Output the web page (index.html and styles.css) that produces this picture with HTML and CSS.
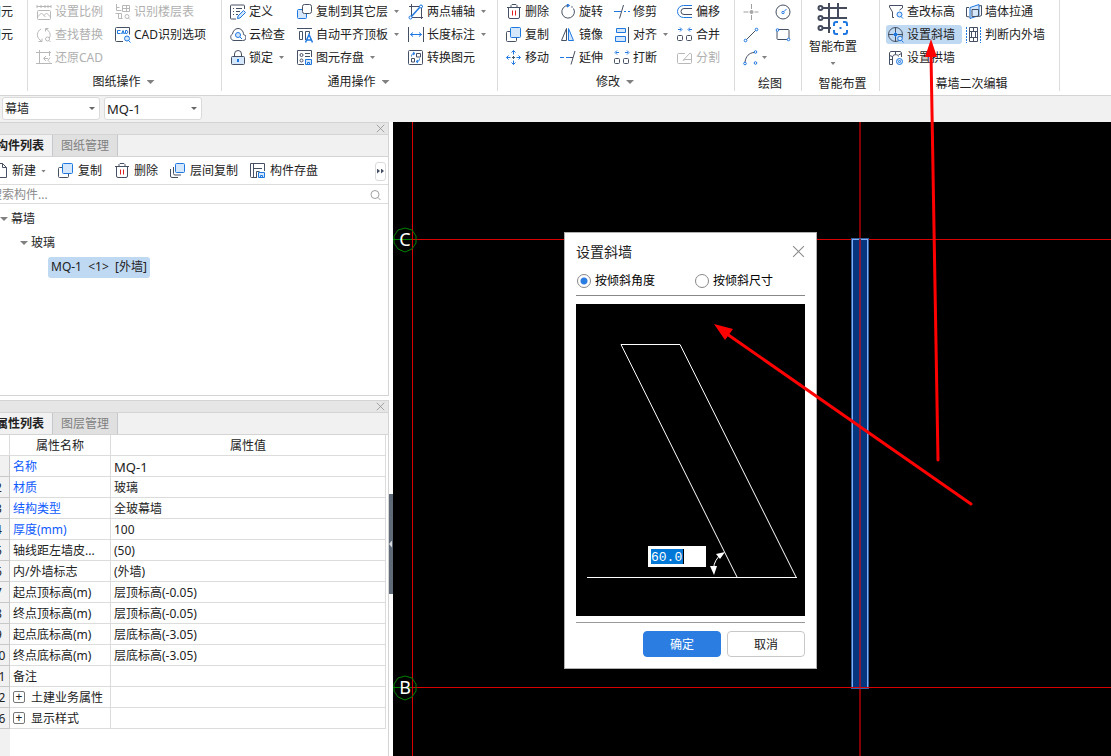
FILE: index.html
```html
<!DOCTYPE html>
<html lang="zh-CN">
<head>
<meta charset="utf-8">
<title>设置斜墙</title>
<link rel="stylesheet" href="styles.css">
</head>
<body>
<svg class="defs" aria-hidden="true">
  <symbol id="scale" viewBox="0 0 16 16"><path class="k" d="M1 1v3M15 1v3M1 2.500h14M5 1v3M9 1v3M12 1v3"/><rect class="k" x="1.500" y="6.500" width="13" height="9" rx="1"/><path class="k" d="M1.500 13l4-4 4 4M8 11.500l2.500-2.500 4 4"/></symbol>
  <symbol id="floors" viewBox="0 0 16 16"><path class="k" d="M1.500 0v6.500h5M1.500 3.500h3M7.500 1.500h7v6h-7zM7.500 4.500h7M11.500 1.500v6M.500 9.500h6v5M3.500 9.500v5h4"/><circle class="k" cx="12" cy="12.500" r="2"/><path class="k" d="M13.500 14l1.500 1.500"/></symbol>
  <symbol id="replace" viewBox="0 0 16 16"><path class="k" d="M5 2a6.500 6.500 0 0 0-1 11l1.500 1M2.500 14.500h3.500v-3M9.500 2a6.300 6.300 0 0 1 4 9M12.500 1.500h-3v3"/><circle class="k" cx="11.500" cy="12" r="2"/><path class="k" d="M13 13.500l1.500 1.500"/></symbol>
  <symbol id="cad" viewBox="0 0 16 16"><path class="k" d="M.500 7v6.500a1 1 0 0 0 1 1H8M.500 7V1.500a1 1 0 0 1 1-1h13v7"/><path class="b" d="M5.500 3.500h-3v3h3M6.500 7L8 3.500 9.500 7M7 6h2M10.500 3.500v3h1.500l1-1.500-1-1.500z"/><circle class="bf" cx="12" cy="11.500" r="2.500"/><path class="b" d="M13.500 13.500l2 2"/></symbol>
  <symbol id="restore" viewBox="0 0 16 16"><path class="k" d="M0 2.500h15M3.500 0v14M0 13.500h16M13.500 1v5"/><path class="k" d="M8 8.500h4M10 6l-2.500 2.500L10 11M14 7.500l-2 3 2 2"/></symbol>
  <symbol id="define" viewBox="0 0 16 16"><path class="k" d="M14.500 5V2a1 1 0 0 0-1-1h-12a1 1 0 0 0-1 1v12a1 1 0 0 0 1 1H6M3 4.500h1M6 4.500h6M3 7.500h1M6 7.500h4M3 10.500h1M6 10.500h2"/><path class="bf" d="M8 12l5.500-5.500 2 2L10 14l-2.500.500z"/></symbol>
  <symbol id="cloud" viewBox="0 0 16 16"><path class="k" d="M4 13.500h8.500a3 3 0 0 0 1-6C13.500 4 11 1.500 8 1.500S3 4 2.500 7c-3 1.500-2 6.500 1.500 6.500z"/><circle class="bf" cx="8" cy="8" r="2.500"/><path class="b" d="M10 10l2 2"/></symbol>
  <symbol id="lock" viewBox="0 0 16 16"><path class="k" d="M4.500 6V4a3.500 3.500 0 0 1 7 0v2"/><rect class="kf" x="1.500" y="6.500" width="13" height="8" rx="1"/><path class="b2" d="M8 9v3"/></symbol>
  <symbol id="copy" viewBox="0 0 16 16"><path class="k" d="M4 4.500H1.500a1 1 0 0 0-1 1v8a1 1 0 0 0 1 1h8a1 1 0 0 0 1-1V11"/><rect class="bf" x="4.500" y=".500" width="10" height="10" rx="1"/></symbol>
  <symbol id="copyto" viewBox="0 0 16 16"><rect class="bf" x=".500" y="5.500" width="9" height="9" rx="1"/><rect class="kw" x="5.500" y=".500" width="9" height="9" rx="2"/></symbol>
  <symbol id="aligntop" viewBox="0 0 16 16"><path class="k" d="M0 1.500h15M2.500 4.500h3v8h-3zM8.500 13V4.500h4V7"/><path class="b15" d="M8.500 15.500L12 7.500l3.500 8M9.500 13h5"/></symbol>
  <symbol id="store" viewBox="0 0 16 16"><path class="k" d="M7 14.500H1.500a1 1 0 0 1-1-1V.500h14V7M8 3.500h5M8 6.500h5"/><circle class="k" cx="4.500" cy="5" r="1.500"/><circle class="k" cx="4.500" cy="10.500" r="1.500"/><path class="bf" d="M8.500 9.500h6v5h-6zM10.500 14.500v-2h2v2"/></symbol>
  <symbol id="axis2" viewBox="0 0 16 16"><path class="k" d="M1 2.500h14M3.500 0v15M1 13.500h14M13.500 1v14"/><path class="b15" d="M3 13L12 3"/><circle class="bw" cx="13" cy="2.500" r="1.500"/><circle class="bw" cx="2.500" cy="13.500" r="1.500"/></symbol>
  <symbol id="length" viewBox="0 0 16 16"><path class="k" d="M.500 0v15M15.500 0v15"/><path class="b" d="M2.500 7.500h11M5 5.500L2.500 7.500 5 9.500M11 5.500l2.500 2-2.500 2"/></symbol>
  <symbol id="convert" viewBox="0 0 16 16"><rect class="k" x=".500" y=".500" width="14" height="14" rx="1"/><path class="k" d="M8.500 3.500h4v3.500h-4zM3.500 8.500h3v3.500h-3z"/><path class="b" d="M3.500 6.500c0-2 .500-3 3-3M5 2l2 1.500L5 5M11.500 8.500c0 2-.500 3-3 3M10 10l-2 1.500 2 1.500"/></symbol>
  <symbol id="trash" viewBox="0 0 16 16"><path class="k" d="M1 3.500h14M2.500 4v9a1.500 1.500 0 0 0 1.500 1.500h8a1.500 1.500 0 0 0 1.500-1.500V4M5 3V1.500L6 .500h4l1 1V3"/><path class="r" d="M6.500 6.500v5M9.500 6.500v5"/></symbol>
  <symbol id="rotate" viewBox="0 0 16 16"><path class="k" d="M8 1.500a6.300 6.300 0 1 0 5.500 3"/><path class="b15" d="M7 0l2 1.500-2 1.500"/><circle class="k" cx="12" cy="3" r=".3"/></symbol>
  <symbol id="trim" viewBox="0 0 16 16"><path class="b" d="M0 7.500h7M10 7.500h2M14 7.500h2"/><path class="k" d="M9.500 1L5.500 14.500"/></symbol>
  <symbol id="offset" viewBox="0 0 16 16"><path class="b" d="M15 1.500H6.500a6 6 0 0 0 0 12H15"/><path class="k" d="M15 4.500H7a3 3 0 0 0 0 6h8"/></symbol>
  <symbol id="mirror" viewBox="0 0 16 16"><path class="k" d="M6.500 1.500v12H1.500z"/><path class="bf" d="M8.500 1.500v12h5z"/></symbol>
  <symbol id="align" viewBox="0 0 16 16"><path class="bf" d="M2.500 1.500h9v4h-9zM1.500 9.500h10v5h-10z"/><path class="k" d="M14.500 0v16"/></symbol>
  <symbol id="merge" viewBox="0 0 16 16"><rect class="k" x=".500" y="8.500" width="5" height="5" rx="1"/><rect class="k" x="9.500" y="8.500" width="5" height="5" rx="1"/><path class="b" d="M1 2.500h3M3 .500l2 2-2 2M15 2.500h-3M13 .500l-2 2 2 2"/></symbol>
  <symbol id="break" viewBox="0 0 16 16"><rect class="k" x=".500" y="8.500" width="5" height="5" rx="1"/><rect class="k" x="9.500" y="8.500" width="5" height="5" rx="1"/><path class="b" d="M2 2.500h3M3 .500l-2 2 2 2M14 2.500h-3M13 .500l2 2-2 2"/></symbol>
  <symbol id="move" viewBox="0 0 16 16"><path class="b" d="M7.500 .500v4M7.500 10.500v4M.500 7.500h4M10.500 7.500h4M5.500 2.500l2-2 2 2M5.500 12.500l2 2 2-2M2.500 5.500l-2 2 2 2M12.500 5.500l2 2-2 2"/><path class="k" d="M6 7.500h3M7.500 6v3"/></symbol>
  <symbol id="extend" viewBox="0 0 16 16"><path class="b" d="M0 7.500h4M6 7.500h4"/><path class="k" d="M10 7.500h3M15 1l-4 13.500"/></symbol>
  <symbol id="split" viewBox="0 0 16 16"><path class="k" d="M8 3.500H1.500a1 1 0 0 0-1 1v8a1 1 0 0 0 1 1h12a1 1 0 0 0 1-1V9M6 10.500L13 3l1.500 1v5.500H8z"/></symbol>
  <symbol id="point" viewBox="0 0 16 16"><path class="g" d="M8.500 0v5M8.500 11v5M.500 8h5M11.500 8h4"/><circle class="gd" cx="8.500" cy="8" r="2"/></symbol>
  <symbol id="circle" viewBox="0 0 16 16"><circle class="k" cx="8" cy="8" r="7"/><circle class="bw" cx="8" cy="8.500" r="1.200"/><path class="b" d="M9 7.500l2.500-2.500"/></symbol>
  <symbol id="line" viewBox="0 0 16 16"><path class="k" d="M3 13L13 3"/><circle class="bw" cx="2.500" cy="13.500" r="1.300"/><circle class="bw" cx="13.500" cy="2.500" r="1.300"/></symbol>
  <symbol id="rect" viewBox="0 0 16 16"><rect class="k" x="2" y="2.500" width="12" height="10" rx="1"/><circle class="bw" cx="2.500" cy="3" r="1.300"/><circle class="bw" cx="13.500" cy="12.500" r="1.300"/></symbol>
  <symbol id="arc" viewBox="0 0 16 16"><path class="k" d="M2 12C3 6 6 3 11 2.500"/><circle class="bw" cx="2" cy="13.500" r="1.300"/><circle class="bw" cx="12.500" cy="2" r="1.300"/><circle class="bw" cx="12.500" cy="13" r="1.300"/></symbol>
  <symbol id="smart" viewBox="0 0 32 32"><path class="k2" d="M5 5h25M5 15h25M5 25h9M12 0v30M21 0v15"/><circle class="k2w" cx="3.500" cy="5" r="2"/><circle class="k2w" cx="3.500" cy="15" r="2"/><circle class="k2w" cx="3.500" cy="25" r="2"/><path class="b2" d="M17 23v-2a2 2 0 0 1 2-2h2M26 19h2a2 2 0 0 1 2 2v2M30 27v2a2 2 0 0 1-2 2h-2M21 31h-2a2 2 0 0 1-2-2v-2M23.500 24v2"/></symbol>
  <symbol id="height" viewBox="0 0 16 16"><path class="k" d="M6 13.500H4.500V8L1.500 3V1.500h13V4l-3 2"/><circle class="bf" cx="11.500" cy="10.500" r="2.500"/><path class="b" d="M13 12.500l2 2"/></symbol>
  <symbol id="through" viewBox="0 0 16 16"><path class="bf" d="M4 3.500l9-3v11l-9 3z"/><path class="k" d="M3 3.500H.500v9l3 .500M13 2l2.500-.500v10l-2.500 1M6 5.500h6.500v7H6z"/></symbol>
  <symbol id="slant" viewBox="0 0 16 16"><circle class="k" cx="7.500" cy="7.500" r="7"/><path class="k" d="M0 7.500h15M7.500 0v15"/><path class="bd" d="M7.500 5.500l2 2-2 2-2-2z"/><circle class="bf" cx="12" cy="11.500" r="2.300"/><path class="b" d="M13.500 13.500l2 2"/></symbol>
  <symbol id="judge" viewBox="0 0 16 16"><path class="k" d="M3.500 .500h8v14h-8zM3.500 4.500h8M3.500 10.500h8M7.500 .500v4M5.500 4.500v6M9.500 4.500v6M7.500 10.500v4"/><path class="bdash" d="M.500 0v16M14.500 0v16"/></symbol>
  <symbol id="arch" viewBox="0 0 16 16"><path class="k" d="M1.500 14.500V3l1-1.500h10l1 1.500v4M1.500 14.500h3V7c0-3 6-3 6-.500M1.500 9.500h3M1.500 5.500l3 1M7.500 1.500v3M10.500 5l3-1.500"/><circle class="bf" cx="11.500" cy="11.500" r="3"/><circle class="b" cx="11.500" cy="11.500" r="1"/></symbol>
  <symbol id="file" viewBox="0 0 16 16"><path class="k" d="M3 .500h7.500l4 4v10h-12V1M10.500 .500v4h4"/></symbol>
  <symbol id="layercopy" viewBox="0 0 16 16"><path class="k" d="M.500 6v7a1.500 1.500 0 0 0 1.500 1.500h6M3.500 4v6.500a1.500 1.500 0 0 0 1.500 1.500h6"/><rect class="bf" x="5.500" y=".500" width="9" height="9" rx="1"/></symbol>
  <symbol id="save" viewBox="0 0 16 16"><path class="k" d="M7 14.500H1.500a1 1 0 0 1-1-1V.500h14V8M3.500 .500v14M3.500 5.500H12M6.500 14.500V8.500h3"/><path class="bf" d="M8.500 9.500h6v5h-6zM10.500 14.500v-2h2v2"/></symbol>
  <symbol id="find" viewBox="0 0 16 16"><circle class="g" cx="7" cy="7.500" r="4"/><path class="g" d="M10 10.500l2.500 2.500"/></symbol>
  <symbol id="close" viewBox="0 0 12 12"><path class="x" d="M1 1l10 10M11 1L1 11"/></symbol>
</svg>

<div class="app">
  <header class="ribbon">
    <section class="group g-cut">
      <div class="tools"><button class="tool">图元</button><button class="tool">图元</button></div>
    </section>
    <section class="group g-sheet">
      <div class="tools">
        <button class="tool off" disabled><svg><use href="#scale"/></svg>设置比例</button>
        <button class="tool off" disabled><svg><use href="#floors"/></svg>识别楼层表</button>
        <button class="tool off" disabled><svg><use href="#replace"/></svg>查找替换</button>
        <button class="tool"><svg><use href="#cad"/></svg>CAD识别选项</button>
        <button class="tool off" disabled><svg><use href="#restore"/></svg>还原CAD</button>
      </div>
      <h2 class="caption">图纸操作<i class="caret big"></i></h2>
    </section>
    <section class="group g-common">
      <div class="tools">
        <button class="tool"><svg><use href="#define"/></svg>定义</button>
        <button class="tool"><svg><use href="#copyto"/></svg>复制到其它层<i class="caret"></i></button>
        <button class="tool"><svg><use href="#axis2"/></svg>两点辅轴<i class="caret"></i></button>
        <button class="tool"><svg><use href="#cloud"/></svg>云检查</button>
        <button class="tool"><svg><use href="#aligntop"/></svg>自动平齐顶板<i class="caret"></i></button>
        <button class="tool"><svg><use href="#length"/></svg>长度标注<i class="caret"></i></button>
        <button class="tool"><svg><use href="#lock"/></svg>锁定<i class="caret"></i></button>
        <button class="tool"><svg><use href="#store"/></svg>图元存盘<i class="caret"></i></button>
        <button class="tool"><svg><use href="#convert"/></svg>转换图元</button>
      </div>
      <h2 class="caption">通用操作<i class="caret big"></i></h2>
    </section>
    <section class="group g-modify">
      <div class="tools">
        <button class="tool"><svg><use href="#trash"/></svg>删除</button>
        <button class="tool"><svg><use href="#rotate"/></svg>旋转</button>
        <button class="tool"><svg><use href="#trim"/></svg>修剪</button>
        <button class="tool"><svg><use href="#offset"/></svg>偏移</button>
        <button class="tool"><svg><use href="#copy"/></svg>复制</button>
        <button class="tool"><svg><use href="#mirror"/></svg>镜像</button>
        <button class="tool"><svg><use href="#align"/></svg>对齐<i class="caret"></i></button>
        <button class="tool"><svg><use href="#merge"/></svg>合并</button>
        <button class="tool"><svg><use href="#move"/></svg>移动</button>
        <button class="tool"><svg><use href="#extend"/></svg>延伸</button>
        <button class="tool"><svg><use href="#break"/></svg>打断</button>
        <button class="tool off" disabled><svg><use href="#split"/></svg>分割</button>
      </div>
      <h2 class="caption">修改<i class="caret big"></i></h2>
    </section>
    <section class="group g-draw">
      <div class="tools">
        <button class="tool" aria-label="点"><svg><use href="#point"/></svg></button>
        <button class="tool" aria-label="圆"><svg><use href="#circle"/></svg></button>
        <button class="tool" aria-label="直线"><svg><use href="#line"/></svg></button>
        <button class="tool" aria-label="矩形"><svg><use href="#rect"/></svg></button>
        <button class="tool" aria-label="弧"><svg><use href="#arc"/></svg><i class="caret"></i></button>
      </div>
      <h2 class="caption low">绘图</h2>
    </section>
    <section class="group g-smart">
      <button class="bigtool"><svg><use href="#smart"/></svg>智能布置<i class="caret"></i></button>
      <h2 class="caption low">智能布置</h2>
    </section>
    <section class="group g-wall">
      <div class="tools">
        <button class="tool"><svg><use href="#height"/></svg>查改标高</button>
        <button class="tool"><svg><use href="#through"/></svg>墙体拉通</button>
        <button class="tool active"><svg><use href="#slant"/></svg>设置斜墙</button>
        <button class="tool"><svg><use href="#judge"/></svg>判断内外墙</button>
        <button class="tool"><svg><use href="#arch"/></svg>设置拱墙</button>
      </div>
      <h2 class="caption low">幕墙二次编辑</h2>
    </section>
  </header>

  <div class="filters">
    <div class="pick"><select aria-label="构件类型"><option>幕墙</option></select></div>
    <div class="pick"><select class="latin" aria-label="构件"><option>MQ-1</option></select></div>
  </div>

  <main class="work">
    <aside class="side">
      <section class="panel panel-list">
        <div class="grip"><button aria-label="关闭"><svg><use href="#close"/></svg></button></div>
        <div class="tabs"><button class="tab on">构件列表</button><button class="tab">图纸管理</button></div>
        <div class="bar">
          <button class="act"><svg><use href="#file"/></svg>新建<i class="caret"></i></button>
          <button class="act"><svg><use href="#copy"/></svg>复制</button>
          <button class="act"><svg><use href="#trash"/></svg>删除</button>
          <button class="act"><svg><use href="#layercopy"/></svg>层间复制</button>
          <button class="act"><svg><use href="#save"/></svg>构件存盘</button>
          <button class="more" aria-label="更多"><i></i><i></i></button>
        </div>
        <div class="search"><input type="text" placeholder="搜索构件..." aria-label="搜索构件"><svg><use href="#find"/></svg></div>
        <ul class="tree">
          <li class="l1"><i class="caret big"></i>幕墙</li>
          <li class="l2"><i class="caret big"></i>玻璃</li>
          <li class="l3"><span class="picked">MQ-1&nbsp; &lt;1&gt;&nbsp; [外墙]</span></li>
        </ul>
      </section>
      <section class="panel panel-props">
        <div class="grip"><button aria-label="关闭"><svg><use href="#close"/></svg></button></div>
        <div class="tabs"><button class="tab on">属性列表</button><button class="tab">图层管理</button></div>
        <div class="sheet">
        <table>
          <colgroup><col class="c-no"><col class="c-name"><col></colgroup>
          <thead><tr><th></th><th>属性名称</th><th>属性值</th></tr></thead>
          <tbody>
            <tr class="key"><th>1</th><td>名称</td><td class="latin">MQ-1</td></tr>
            <tr class="key"><th>2</th><td>材质</td><td>玻璃</td></tr>
            <tr class="key"><th>3</th><td>结构类型</td><td>全玻幕墙</td></tr>
            <tr class="key"><th>4</th><td>厚度(mm)</td><td>100</td></tr>
            <tr><th>5</th><td>轴线距左墙皮...</td><td>(50)</td></tr>
            <tr><th>6</th><td>内/外墙标志</td><td>(外墙)</td></tr>
            <tr><th>7</th><td>起点顶标高(m)</td><td>层顶标高(-0.05)</td></tr>
            <tr><th>8</th><td>终点顶标高(m)</td><td>层顶标高(-0.05)</td></tr>
            <tr><th>9</th><td>起点底标高(m)</td><td>层底标高(-3.05)</td></tr>
            <tr><th>10</th><td>终点底标高(m)</td><td>层底标高(-3.05)</td></tr>
            <tr><th>11</th><td>备注</td><td></td></tr>
            <tr><th>12</th><td><button class="plus" aria-label="展开">+</button>土建业务属性</td><td></td></tr>
            <tr><th>16</th><td><button class="plus" aria-label="展开">+</button>显示样式</td><td></td></tr>
          </tbody>
        </table>
        </div>
      </section>
    </aside>
    <div class="splitter"><button aria-label="收起"></button></div>
    <section class="canvas">
      <svg class="drawing" aria-hidden="true">
        <rect class="axis" x="19" y="0" width="1" height="100%"/>
        <rect class="axis" x="19" y="117" width="100%" height="1"/>
        <rect class="axis-dark" x="466" y="0" width="2" height="100%"/>
        <rect class="wall-out" x="458.500" y="116.500" width="17" height="450"/>
        <rect class="wall" x="459.500" y="117.500" width="15" height="448"/>
        <rect class="wall-mid" x="466" y="117" width="2" height="449"/>
        <rect class="axis" x="19" y="565" width="100%" height="1"/>
        <path class="bubble" d="M12 106l7 2 4 6v7l-4 6-7 3-7-3-4-6v-7l4-6z"/>
        <path class="bubble" d="M12 554l7 2 4 6v7l-4 6-7 3-7-3-4-6v-7l4-6z"/>
        <path class="bubble" d="M0 117.500h19M0 565.500h19"/>
        <text class="mark" x="12" y="124">C</text>
        <text class="mark" x="12" y="572">B</text>
      </svg>
      <div class="dialog" role="dialog" aria-labelledby="dlg-title">
        <div class="dlg-head"><h1 id="dlg-title">设置斜墙</h1><button aria-label="关闭"><svg><use href="#close"/></svg></button></div>
        <div class="modes">
          <label><input type="radio" name="mode" checked>按倾斜角度</label>
          <label><input type="radio" name="mode">按倾斜尺寸</label>
        </div>
        <div class="preview">
          <svg viewBox="0 0 229 312" aria-hidden="true">
            <path class="shape" d="M11 273.500h210M161 273L45 40.500h59L220 273"/>
            <path class="shape" d="M137.500 264q1-8 7-13"/>
            <path class="tip" d="M149 248l-9 2 4 5zM134 262h7l-3 9z"/>
          </svg>
          <input class="angle" type="text" value="60.0" aria-label="倾斜角度">
        </div>
        <div class="dlg-foot"><button class="ok">确定</button><button>取消</button></div>
      </div>
    </section>
  </main>
  <svg class="notes" aria-hidden="true">
    <path class="shaft" d="M938 460L931 54M971 504L727 334"/>
    <path class="head" d="M931 39l6 18h-12zM714 324l19 5-8 11z"/>
  </svg>
</div>
</body>
</html>
```
FILE: styles.css
```css
* { box-sizing: border-box; }
body {
  margin: 0;
  overflow: hidden;
  background: #fff;
  color: #222;
  font: 12px/18px "Noto Sans", "Noto Sans CJK SC", sans-serif;
}
button, input, select { font: inherit; color: inherit; }
button { margin: 0; padding: 0; border: 0; background: none; white-space: nowrap; }
h1, h2 { margin: 0; font-weight: 400; }
.defs { position: absolute; width: 0; height: 0; }
.latin { font-size: 13px; }

/* icon strokes */
.k, .kf, .kw { fill: none; stroke: #465064; }
.kf { fill: #d5e7fb; }
.kw { fill: #fff; }
.k2, .k2w { fill: none; stroke: #434b5c; stroke-width: 2; }
.k2w { fill: #fff; }
.b, .b15, .bf, .bw { fill: none; stroke: #1f78e0; }
.b15 { stroke-width: 1.5; }
.bf { fill: #d5e7fb; }
.bw { fill: #fff; }
.b2 { fill: none; stroke: #1f78e0; stroke-width: 2; }
.bd { fill: #1f78e0; stroke: #1f78e0; }
.bdash { fill: none; stroke: #1f78e0; stroke-dasharray: 2 1; }
.r { fill: none; stroke: #e02020; }
.g { fill: none; stroke: #a0a0a0; }
.gd { fill: #a8a8a8; }
.x { fill: none; stroke: #8c8c8c; }

.app { position: relative; display: flex; flex-direction: column; height: 100vh; overflow: hidden; }

/* ribbon */
.ribbon { display: flex; flex: none; padding-bottom: 4px; border-bottom: 1px solid #d4d4d4; background: #fff; }
.group { display: flex; flex-direction: column; flex: none; padding-left: 6px; border-right: 1px solid #dcdcdc; }
.tools { display: grid; grid-auto-rows: 23px; align-items: center; flex: none; height: 69px; }
.tool { display: flex; align-items: center; gap: 3px; height: 19px; padding: 0 2px; border-radius: 3px; }
.tool svg, .act svg { flex: none; width: 16px; height: 16px; }
.tool.active { background: #bfd9f2; }
.off { color: #b0b0b0; }
.off svg { opacity: .4; filter: grayscale(1); }
.caret { flex: none; width: 5px; height: 3px; margin-left: 3px; background: #808080; clip-path: polygon(0 0, 100% 0, 50% 100%); }
.caret.big { width: 8px; height: 4px; }
.caption { display: flex; align-items: center; justify-content: center; gap: 3px; padding: 4px 8px 0 0; font-size: 12px; line-height: 18px; }
.caption.low { padding: 8px 2px 0 0; line-height: 14px; }
.g-cut { width: 28px; padding: 0 12px 0 0; align-items: flex-end; }
.g-sheet { width: 194px; }
.g-sheet .tools { grid-template-columns: 79px 1fr; }
.g-common { width: 276px; }
.g-common .tools { grid-template-columns: 67px 111px 1fr; }
.g-modify { width: 237px; }
.g-modify .tools { grid-template-columns: 54px 54px 63px 1fr; }
.g-draw { width: 67px; }
.g-draw .tools { grid-template-columns: 32px 1fr; }
.g-draw .caret { margin-left: 0; }
.g-smart { width: 78px; }
.g-wall { width: 180px; }
.g-wall .tools { grid-template-columns: 76px 1fr; column-gap: 2px; }
.bigtool { display: flex; flex-direction: column; align-items: center; align-self: flex-start; height: 69px; padding: 3px 0 0 1px; }
.bigtool svg { width: 32px; height: 32px; margin-bottom: 3px; }
.bigtool .caret { margin: 6px 0 0; }

/* filters */
.filters { display: flex; flex: none; gap: 4px; padding: 1px 2px 2px; background: #f1f1f1; }
.pick { position: relative; width: 98px; }
.pick::after { content: ""; position: absolute; right: 5px; top: 10px; width: 6px; height: 3px; background: #666; clip-path: polygon(0 0, 100% 0, 50% 100%); }
.pick select { display: block; width: 100%; height: 23px; padding: 0 2px; border: 1px solid #dadada; border-radius: 3px; background: #fff; appearance: none; }

/* side panels */
.work { display: flex; flex: 1; min-height: 0; }
.side { display: flex; flex-direction: column; flex: none; gap: 4px; width: 389px; }
.panel { display: flex; flex-direction: column; overflow: hidden; border: 1px solid #d4d4d4; border-left: 0; }
.panel-list { flex: none; }
.panel-props { flex: 1; border-bottom: 0; }
.grip { display: flex; align-items: center; justify-content: flex-end; flex: none; height: 11px; padding-right: 3px; background: #e6e6e6; }
.grip button, .grip svg { display: block; width: 9px; height: 9px; }
.tabs { display: flex; flex: none; height: 23px; border-top: 1px solid #d4d4d4; border-bottom: 1px solid #d4d4d4; background: #f1f1f1; }
.tab { width: 65px; background: #e0e0e0; border-right: 1px solid #c4c7cc; color: #808080; }
.tab.on { display: flex; align-items: center; justify-content: flex-end; width: 53px; padding-right: 8px; background: #f1f1f1; color: #222; font-weight: 700; }
.bar { display: flex; align-items: center; flex: none; gap: 12px; height: 28px; margin-left: -8px; padding: 1px 2px 0 0; border-bottom: 1px solid #dcdcdc; }
.act { display: flex; align-items: center; gap: 4px; }
.act .caret { margin-left: 1px; }
.more { display: flex; align-items: center; justify-content: center; gap: 1px; width: 11px; height: 19px; margin-left: auto; border: 1px solid #dcdcdc; border-radius: 3px; }
.more i { width: 3px; height: 5px; background: #465064; clip-path: polygon(0 0, 100% 50%, 0 100%); }
.search { display: flex; align-items: center; flex: none; height: 19px; margin-left: -10px; padding: 1px 4px 0 0; border-bottom: 1px solid #dcdcdc; }
.search input { flex: 1; min-width: 0; height: 17px; padding: 0; border: 0; outline: 0; background: none; }
.search input::placeholder { color: #8c8c8c; opacity: 1; }
.search svg { width: 16px; height: 16px; }
.tree { margin: 0; padding: 3px 0 116px; list-style: none; }
.tree li { display: flex; align-items: center; gap: 3px; height: 24px; }
.tree .caret { margin: 0; }
.tree .l2 { padding-left: 20px; }
.tree .l3 { padding-left: 48px; }
.picked { padding: 1px 3px 2px; border-radius: 3px; background: #bfd9f2; }

/* property sheet */
.sheet { flex: 1; padding-right: 2px; background: linear-gradient(90deg, #f1f1f1 10px, #fff 10px); }
.sheet table { width: calc(100% + 15px); margin-left: -15px; table-layout: fixed; border-collapse: separate; border-spacing: 0; background: #fff; }
.c-no { width: 25px; }
.c-name { width: 101px; }
.sheet th, .sheet td { height: 21px; padding: 2px 3px 0; border: solid #dcdcdc; border-width: 0 1px 1px 0; line-height: 18px; white-space: nowrap; overflow: hidden; }
.sheet th { font-weight: 400; text-align: center; }
.sheet tbody th { padding: 2px 0 0 3px; background: #f1f1f1; border-color: #c8c8c8; }
.key td:nth-child(2) { color: #0f5bff; }
.plus { display: inline-flex; align-items: center; justify-content: center; width: 12px; height: 12px; margin-right: 6px; border: 1px solid #777; border-radius: 2px; line-height: 10px; vertical-align: 1px; }

.splitter { display: flex; flex: none; width: 4px; padding-top: 372px; background: #fff; }
.splitter button { display: flex; align-items: center; width: 4px; height: 100px; background: #5f6b78; }
.splitter button::before { content: ""; width: 3px; height: 7px; background: #d5d9de; clip-path: polygon(100% 0, 100% 100%, 0 50%); }

/* model canvas */
.canvas { position: relative; flex: 1; min-width: 0; background: #000; }
.drawing { display: block; width: 100%; height: 100%; }
.axis { fill: #d80000; }
.axis-dark { fill: #850000; }
.bubble { fill: none; stroke: #008000; }
.mark { fill: #fff; font-size: 18px; text-anchor: middle; }
.wall-out { fill: none; stroke: #365f9f; }
.wall { fill: #05357d; stroke: #7fb0fa; }
.wall-mid { fill: #861b3c; }

/* dialog */
.dialog { position: absolute; left: 171px; top: 110px; width: 253px; padding: 0 11px 11px; border: 1px solid #b0b0b0; background: #fff; }
.dlg-head { display: flex; align-items: center; justify-content: space-between; height: 37px; }
.dlg-head h1 { font-size: 14px; line-height: 20px; }
.dlg-head button, .dlg-head svg { display: block; width: 13px; height: 13px; }
.modes { display: grid; grid-template-columns: 118px 1fr; height: 26px; padding-top: 1px; border-bottom: 1px solid #888; color: #000; }
.modes label { display: flex; align-items: center; gap: 4px; height: 19px; padding-left: 1px; }
.modes input { appearance: none; width: 14px; height: 14px; margin: 0; border: 1px solid #888; border-radius: 50%; background: #fff; }
.modes input:checked { background: radial-gradient(circle, #2b7de1 3px, #fff 4px); }
.preview { position: relative; margin-top: 8px; background: #000; }
.preview svg { display: block; width: 100%; }
.shape { fill: none; stroke: #fff; }
.tip { fill: #fff; }
.angle { position: absolute; left: 72px; top: 242px; width: 58px; height: 21px; padding: 1px 3px 0; border: 0; outline: 0; background: linear-gradient(90deg, #0078d7 32px, #000 32px) 3px 3px / 33px 15px no-repeat #fff; color: #fff; font: 13px/20px "Liberation Mono", monospace; }
.dlg-foot { display: flex; justify-content: flex-end; gap: 6px; margin-top: 6px; padding-top: 8px; border-top: 1px solid #999; }
.dlg-foot button { width: 78px; height: 26px; padding-top: 2px; border: 1px solid #c8c8c8; border-radius: 4px; background: #fff; }
.dlg-foot .ok { border-color: #2b7de1; background: #2b7de1; color: #fff; }

.notes { position: absolute; left: 0; top: 0; width: 100%; height: 100%; pointer-events: none; }
.shaft { fill: none; stroke: #f00; stroke-width: 3; stroke-linecap: round; }
.head { fill: #f00; }
```
